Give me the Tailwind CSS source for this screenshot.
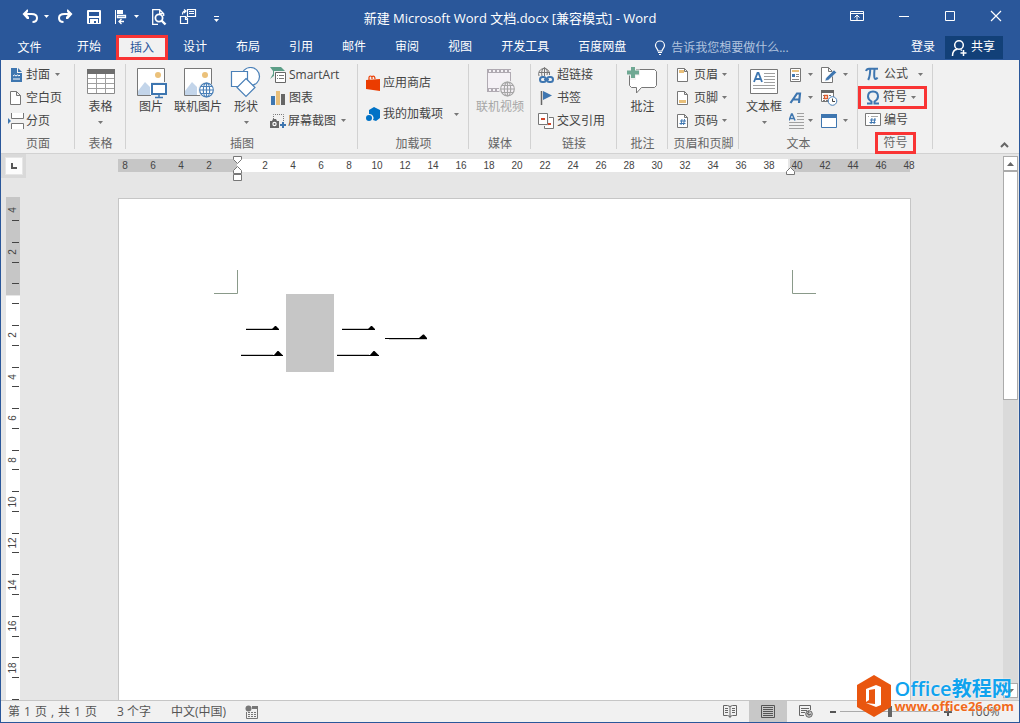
<!DOCTYPE html>
<html lang="zh-CN">
<head>
<meta charset="utf-8">
<title>新建 Microsoft Word 文档.docx - Word</title>
<script src="https://cdn.jsdelivr.net/npm/@tailwindcss/browser@4"></script>
</head>
<body class="relative flex h-screen flex-col overflow-hidden border-x border-b border-[#2a579a] bg-[#e6e6e6] font-['Open_Sans','Noto_Sans_CJK_SC',sans-serif] text-xs leading-4 text-[#444]">
<svg class="hidden" aria-hidden="true">
  <symbol id="caret" viewBox="0 0 5 3"><path d="M0 0h5L2.500 3z" fill="currentColor"/></symbol>
</svg>

<!-- Title bar -->
<header class="shrink-0 bg-[#2a579a] text-white">
  <div class="grid h-[35px] grid-cols-[1fr_auto_1fr] items-center">
    <div class="flex items-center pb-[2px] pl-5">
      <button aria-label="撤消" class="flex items-center gap-[5px]"><svg width="18" height="16" viewBox="0 0 18 16"><path d="M4 5h6.500c3.500 0 5.500 1.500 5.500 4s-2 4-4.500 4" fill="none" stroke="#fff" stroke-width="2"/><path d="M7 .5v2L5.500 5 8 8v2H6L1.500 5 6 .5z" fill="#fff"/></svg><svg class="h-[3px] w-[5px]"><use href="#caret"/></svg></button>
      <button aria-label="恢复" class="ml-2"><svg width="18" height="16" viewBox="0 0 18 16"><path d="M13 5H7.500C4 5 2 6.500 2 9s2 4 4.500 4" fill="none" stroke="#fff" stroke-width="2"/><path d="M10 .5v2L11.500 5 9 8v2h2l4.500-5L11 .5z" fill="#fff"/></svg></button>
      <button aria-label="保存" class="ml-[11px]"><svg width="16" height="16" viewBox="0 0 16 16"><path d="M1.500 1.500h13v13h-13zM2 2.500h12M2.500 2v12M13.500 2v12" fill="none" stroke="#fff"/><path d="M2 7h12v2H2zM4 10h8v5h-2v-3H8v3H4z" fill="#fff"/></svg></button>
      <button aria-label="对齐" class="ml-3 flex items-center gap-[6px]"><svg width="14" height="16" viewBox="0 0 14 16"><path d="M1.500 1v14" stroke="#fff"/><path d="M3 1h6v4H3z" fill="#fff"/><path d="M3.500 6.500h8v2h-8zM5 12.500h5M7.500 10 5 12.500 7.500 15" fill="none" stroke="#fff" stroke-width="1.300"/></svg><svg class="h-[3px] w-[5px]"><use href="#caret"/></svg></button>
      <button aria-label="打印预览" class="ml-3"><svg width="16" height="18" viewBox="0 0 16 18" fill="none" stroke="#fff" stroke-width="1.300"><path d="M7 16.300H1.700V1.700h7l4 4V8M8.700 1.700v4h4"/><circle cx="8" cy="10" r="3.600" stroke-width="1.800"/><path d="m10.500 12.500 4 4" stroke-width="2.400"/></svg></button>
      <button aria-label="粘贴" class="ml-3"><svg width="18" height="18" viewBox="0 0 18 18" fill="none" stroke="#fff" stroke-width="1.200"><path d="M8.500 1.500h8v7h-8zM10 3.500h5M10 5.500h5M1.500 8.500h5l2 2v5h-7zM6.500 8.500v3h2M3.500 6.500c0-3 1-3.500 3-3.500M5 1.500 7 3 5 5"/></svg></button>
      <button aria-label="自定义快速访问工具栏" class="mt-1 ml-4"><svg width="7" height="8" viewBox="0 0 7 8"><path d="M1 1.500h5" stroke="#fff"/><path d="M1 4h5L3.500 7z" fill="#fff"/></svg></button>
    </div>
    <h1 class="pt-px text-[13px]">新建 Microsoft Word 文档.docx [兼容模式] - Word</h1>
    <div class="flex items-center justify-end gap-[34px] pr-[17px] pb-1">
      <button aria-label="功能区显示选项"><svg width="14" height="12" viewBox="0 0 14 12" fill="none" stroke="#fff"><path d="M.5 1.500h13v9H.5zM.5 3.500h13M7 10V5M4.500 7.500 7 5l2.500 2.500"/></svg></button>
      <button aria-label="最小化"><svg width="12" height="12" viewBox="0 0 12 12"><path d="M1 6.500h10" stroke="#fff"/></svg></button>
      <button aria-label="最大化"><svg width="12" height="12" viewBox="0 0 12 12"><path d="M1.500 1.500h9v9h-9z" fill="none" stroke="#fff"/></svg></button>
      <button aria-label="关闭"><svg width="12" height="12" viewBox="0 0 12 12"><path d="m1 1 10 10M11 1 1 11" stroke="#fff" stroke-width="1.200"/></svg></button>
    </div>
  </div>
  <div class="flex h-[25px] items-stretch">
    <nav class="flex items-stretch gap-px">
      <button class="w-[61px] pr-1">文件</button>
      <button class="px-[14px] pb-px">开始</button>
      <button class="border-3 border-[#f93434] bg-[#f1f1f1] px-[11px] text-[#2a579a]">插入</button>
      <button class="px-[14px] pb-px">设计</button>
      <button class="px-[14px] pb-px">布局</button>
      <button class="px-[14px] pb-px">引用</button>
      <button class="px-[14px] pb-px">邮件</button>
      <button class="px-[14px] pb-px">审阅</button>
      <button class="px-[14px] pb-px">视图</button>
      <button class="px-[14px] pb-px">开发工具</button>
      <button class="px-[14px] pb-px">百度网盘</button>
    </nav>
    <label class="ml-[14px] flex flex-1 items-center gap-[5px]">
      <svg width="12" height="16" viewBox="0 0 12 16" fill="none" stroke="#fff" stroke-width="1.200"><path d="M4 11c0-2-2.500-3-2.500-5.500a4.500 4.500 0 0 1 9 0C10.500 8 8 9 8 11zM4 12.500h4M5 14.500h2"/></svg>
      <input aria-label="告诉我您想要做什么" placeholder="告诉我您想要做什么..." class="w-36 bg-transparent outline-none placeholder:text-[#b1c3de]">
    </label>
    <button class="px-[10px] pb-px">登录</button>
    <button class="mt-px mr-4 mb-px flex items-center gap-[3px] bg-[#124078] pr-[8px] pl-[6px]"><svg width="17" height="18" viewBox="0 0 17 18" fill="none" stroke="#fff" stroke-width="1.500"><circle cx="8" cy="6" r="4.300"/><path d="M1.500 17c0-4 2-6.500 5-6.700M9.500 10.500l1.500 1M12.500 11v6M9.500 14h6"/></svg><span class="pb-px">共享</span></button>
  </div>
</header>

<!-- Ribbon -->
<section aria-label="插入" class="flex h-[94px] shrink-0 border-b border-[#d2d2d2] bg-[#f1f1f1] pt-[3px]">
  <div class="relative flex w-[74px] shrink-0 flex-col after:absolute after:top-px after:right-0 after:h-[85px] after:w-px after:bg-[#d2d2d2]">
    <div class="grid h-[69px] grid-rows-3 pl-[7px]">
      <button class="flex items-center gap-[2px]"><svg width="16" height="16" viewBox="0 0 16 16"><path d="M3 1h6v5h5v9H3z" fill="#3e76b0"/><path d="M10 1v4h4z" fill="#3e76b0"/><path d="m5 9 1.500-1L8 9l1.500-1L11 9l1-1M5 12h7" fill="none" stroke="#fff"/></svg>封面<svg class="ml-[3px] h-[3px] w-[5px] text-[#777]"><use href="#caret"/></svg></button>
      <button class="flex items-center gap-[2px]"><svg width="16" height="16" viewBox="0 0 16 16"><path d="M2.500 1.500h6l4 4v9h-10zM8.500 1.500v4h4" fill="#fff" stroke="#777"/></svg>空白页</button>
      <button class="flex items-center gap-[2px]"><svg width="16" height="16" viewBox="0 0 16 16"><path d="M3.500 0v5.500h12V0M3.500 16v-5.500h12V16" fill="#fff" stroke="#777"/><path d="M0 5v6l3-3z" fill="#3e76b0"/></svg>分页</button>
    </div>
    <div class="pt-1 text-center text-[#666]">页面</div>
  </div>

  <div class="relative flex w-[51px] shrink-0 flex-col after:absolute after:top-px after:right-0 after:h-[85px] after:w-px after:bg-[#d2d2d2]">
    <button class="flex h-[69px] flex-col items-center pt-1"><svg width="32" height="32" viewBox="0 0 32 32"><path d="M2.500 2.500h27v24h-27z" fill="#fff" stroke="#8a8a8a"/><path d="M2 2h28v5H2z" fill="#6d6d6d"/><path d="M3 11.500h26M3 16.500h26M3 21.500h26M11.500 7v19M20.500 7v19" stroke="#a0a0a0"/></svg><span>表格</span><svg class="mt-[6px] h-[3px] w-[5px] text-[#777]"><use href="#caret"/></svg></button>
    <div class="pt-1 text-center text-[#666]">表格</div>
  </div>

  <div class="relative flex w-[232px] shrink-0 flex-col after:absolute after:top-px after:right-0 after:h-[85px] after:w-px after:bg-[#d2d2d2]">
    <div class="flex h-[69px] pl-[2px]">
      <button class="flex w-[46px] flex-col items-center pt-1"><svg width="32" height="32" viewBox="0 0 32 32"><path d="M2.500 1.500h27v27h-27z" fill="#fff" stroke="#777"/><circle cx="23" cy="8" r="3" fill="#ebc17a"/><path d="M3 28V24l7-9 5 5v8z" fill="#c3d5ea"/><path d="M16 15h16v14H16z" fill="#f1f1f1"/><path d="M17 17h14v10H17z" fill="#fff" stroke="#3e76b0" stroke-width="2"/><path d="M24 28v2M20 30.500h8" stroke="#3e76b0" stroke-width="1.500"/></svg>图片</button>
      <button class="flex w-[48px] flex-col items-center pt-1"><svg width="32" height="32" viewBox="0 0 32 32"><path d="M2.500 1.500h27v27h-27z" fill="#fff" stroke="#777"/><circle cx="23" cy="8" r="3" fill="#ebc17a"/><path d="M3 28V24l7-9 5 5v8z" fill="#c3d5ea"/><circle cx="24" cy="23" r="8" fill="#f1f1f1"/><g fill="#fff" stroke="#4a80b8" stroke-width="1.200"><circle cx="24.500" cy="23" r="6.800"/><ellipse cx="24.500" cy="23" rx="3.200" ry="6.800" fill="none"/><path d="M24.500 16v14M18 23h13M19 19.500h11M19 26.500h11"/></g></svg>联机图片</button>
      <button class="flex w-[48px] flex-col items-center pt-1"><svg width="32" height="32" viewBox="0 0 32 32" fill="#fff" stroke="#4a80b8" stroke-width="1.200"><circle cx="20.500" cy="9.500" r="9"/><path d="M1.500 4.500h16v15h-16z"/><path d="m16 11.500 9 9-9 9-9-9z"/></svg><span>形状</span><svg class="mt-[6px] h-[3px] w-[5px] text-[#777]"><use href="#caret"/></svg></button>
      <div class="grid grid-rows-3">
        <button class="flex items-center gap-[3px]"><svg width="16" height="16" viewBox="0 0 16 16"><path d="M0 0h11l4 4H5v4l-5 4 3-5V4z" fill="#5c9e87"/><path d="M4 4h12v12H4z" fill="#f1f1f1"/><path d="M5.500 5.500h10v10h-10z" fill="#fff" stroke="#666"/><path d="M7 8.500h1M9 8.500h5M7 11.500h1M9 11.500h5" stroke="#777"/></svg>SmartArt</button>
        <button class="flex items-center gap-[3px]"><svg width="16" height="16" viewBox="0 0 16 16"><path d="M1 6h4v9H1z" fill="#3e76b0"/><path d="M6 1h4v14H6z" fill="#e8bf7a"/><path d="M11 4h4v11h-4z" fill="#666"/></svg>图表</button>
        <button class="flex items-center gap-[2px]"><svg width="16" height="16" viewBox="0 0 16 16"><path d="M3.500 6V1.500h10V9" fill="none" stroke="#777" stroke-dasharray="1 1"/><path d="M0 8h2l1-2h3l1 2h2v7H0z" fill="#666"/><circle cx="4.500" cy="11" r="2.200" fill="#fff"/><circle cx="4.500" cy="11" r="1" fill="#666"/><path d="M13 9v6M10 12h6" stroke="#3e76b0" stroke-width="2"/></svg>屏幕截图<svg class="ml-[3px] h-[3px] w-[5px] text-[#777]"><use href="#caret"/></svg></button>
      </div>
    </div>
    <div class="pt-1 text-center text-[#666]">插图</div>
  </div>

  <div class="relative flex w-[111px] shrink-0 flex-col after:absolute after:top-px after:right-0 after:h-[85px] after:w-px after:bg-[#d2d2d2]">
    <div class="grid h-[69px] grid-rows-[31px_31px] content-center pt-[2px] pl-[7px]">
      <button class="flex items-center gap-[2px]"><svg width="16" height="16" viewBox="0 0 16 16"><path d="m1 5 14-1v12L1 14z" fill="#eb3c00"/><path d="M4 5V2.500C4 .5 7 .5 7 2.500V4M7 1.500c2-1 3 0 3 2.500" fill="none" stroke="#eb3c00" stroke-width="1.200"/></svg>应用商店</button>
      <button class="flex items-center gap-[2px]"><svg width="16" height="16" viewBox="0 0 16 16"><path d="m9 1 6 3v8l-4 3-3-1a4 4 0 0 0-4-6V4z" fill="#0072c6"/><circle cx="4" cy="12" r="3" fill="#0072c6"/></svg>我的加载项<svg class="ml-[9px] h-[3px] w-[5px] text-[#777]"><use href="#caret"/></svg></button>
    </div>
    <div class="pt-1 text-center text-[#666]">加载项</div>
  </div>

  <div class="relative flex w-[62px] shrink-0 flex-col after:absolute after:top-px after:right-0 after:h-[85px] after:w-px after:bg-[#d2d2d2]">
    <button disabled class="flex h-[69px] flex-col items-center pt-1 text-[#a6a6a6]"><svg width="32" height="32" viewBox="0 0 32 32"><path d="M3 2h24v23H3z" fill="#b0aab2"/><path d="M4 6h22v15H4z" fill="#f5f1f6"/><path d="M5 4h22M5 23h12" stroke="#f5f1f6" stroke-width="2" stroke-dasharray="2 2"/><circle cx="23.500" cy="22" r="8.500" fill="#f1f1f1"/><g fill="#f5f1f6" stroke="#a6a6a6" stroke-width="1.200"><circle cx="23.500" cy="22" r="6.800"/><ellipse cx="23.500" cy="22" rx="3.200" ry="6.800" fill="none"/><path d="M23.500 15v14M17 22h13M18 18.500h11M18 25.500h11"/></g></svg>联机视频</button>
    <div class="pt-1 text-center text-[#666]">媒体</div>
  </div>

  <div class="relative flex w-[86px] shrink-0 flex-col after:absolute after:top-px after:right-0 after:h-[85px] after:w-px after:bg-[#d2d2d2]">
    <div class="grid h-[69px] grid-rows-3 pl-[7px]">
      <button class="flex items-center gap-[3px]"><svg width="16" height="16" viewBox="0 0 16 16" fill="none"><g stroke="#777"><path d="M1 9A5.500 5.500 0 1 1 11.500 8M6.500.5V9M1 5.500h11M4 9C3 5 4 2 6.500.5 9 2 10 5 9 8"/></g><g stroke="#3e76b0" stroke-width="2"><rect x="2" y="10" width="6" height="5" rx="2.500"/><rect x="9" y="10" width="6" height="5" rx="2.500"/></g><path d="M6 12.500h5" stroke="#3e76b0" stroke-width="1.500"/></svg>超链接</button>
      <button class="flex items-center gap-[3px]"><svg width="16" height="16" viewBox="0 0 16 16"><path d="M3.500 1v14" stroke="#666" stroke-width="1.500"/><path d="m5 1 9 4.500L5 10z" fill="#3e76b0"/></svg>书签</button>
      <button class="flex items-center gap-[3px]"><svg width="16" height="16" viewBox="0 0 16 16"><path d="M.5.5h9v11h-9z" fill="#fff" stroke="#777"/><path d="M3 5h4v2H3z" fill="#d2472b"/><path d="M11 4.500h4.500v11h-9V13" fill="none" stroke="#777"/><path d="M11 5h4v10H7v-2h4z" fill="#fff"/><path d="M10 10h3v2h-3z" fill="#d2472b"/></svg>交叉引用</button>
    </div>
    <div class="pt-1 text-center text-[#666]">链接</div>
  </div>

  <div class="relative flex w-[51px] shrink-0 flex-col after:absolute after:top-px after:right-0 after:h-[85px] after:w-px after:bg-[#d2d2d2]">
    <button class="flex h-[69px] flex-col items-center pt-1"><svg width="32" height="32" viewBox="0 0 32 32"><path d="M4.500 2.500h23l2 2v14l-2 2h-13l-5 5.500v-5.500h-5l-2-2v-14z" fill="#fff" stroke="#777"/><path d="M6-1v14M-1 5.500h14" stroke="#f1f1f1" stroke-width="6"/><path d="M6 0v11M0 5.500h12" stroke="#6fa893" stroke-width="4"/></svg>批注</button>
    <div class="pt-1 text-center text-[#666]">批注</div>
  </div>

  <div class="relative flex w-[71px] shrink-0 flex-col after:absolute after:top-px after:right-0 after:h-[85px] after:w-px after:bg-[#d2d2d2]">
    <div class="grid h-[69px] grid-rows-3 pl-[7px]">
      <button class="flex items-center gap-[3px]"><svg width="16" height="16" viewBox="0 0 16 16"><path d="M2.500 1.500h7l3 3v10h-10zM9.500 1.500v3h3" fill="#fff" stroke="#777"/><path d="M4 3h5v3H4z" fill="#e8bf7a"/></svg>页眉<svg class="ml-px h-[3px] w-[5px] text-[#777]"><use href="#caret"/></svg></button>
      <button class="flex items-center gap-[3px]"><svg width="16" height="16" viewBox="0 0 16 16"><path d="M2.500 1.500h7l3 3v10h-10zM9.500 1.500v3h3" fill="#fff" stroke="#777"/><path d="M4 10h7v3H4z" fill="#e8bf7a"/></svg>页脚<svg class="ml-px h-[3px] w-[5px] text-[#777]"><use href="#caret"/></svg></button>
      <button class="flex items-center gap-[3px]"><svg width="16" height="16" viewBox="0 0 16 16"><path d="M2.500 1.500h7l3 3v10h-10zM9.500 1.500v3h3" fill="#fff" stroke="#777"/><path d="m7 6-1 6M9.500 6l-1 6M5 8h6M4.500 10.500h6" stroke="#3e76b0"/></svg>页码<svg class="ml-px h-[3px] w-[5px] text-[#777]"><use href="#caret"/></svg></button>
    </div>
    <div class="pt-1 text-center whitespace-nowrap text-[#666]">页眉和页脚</div>
  </div>

  <div class="relative flex w-[119px] shrink-0 flex-col after:absolute after:top-px after:right-0 after:h-[85px] after:w-px after:bg-[#d2d2d2]">
    <div class="flex h-[69px]">
      <button class="flex w-[50px] flex-col items-center pt-1"><svg width="32" height="32" viewBox="0 0 32 32"><path d="M2.500 2.500h27v24h-27z" fill="#fff" stroke="#777"/><path d="m6 15 3.500-9h1L14 15M7.500 12h5" fill="none" stroke="#3e76b0" stroke-width="1.800"/><path d="M16 6.500h11M16 9.500h11M16 12.500h11M16 15.500h11M5 18.500h22M5 21.500h22" stroke="#a0a0a0"/></svg><span>文本框</span><svg class="mt-[6px] h-[3px] w-[5px] text-[#777]"><use href="#caret"/></svg></button>
      <div class="grid w-8 grid-rows-3">
        <button aria-label="文档部件" class="flex items-center gap-[3px]"><svg width="16" height="16" viewBox="0 0 16 16"><path d="M1.500 1.500h10v13h-10z" fill="#fff" stroke="#777"/><path d="M3 3h7v2H3z" fill="#e8bf7a"/><path d="M3 7h3v3H3z" fill="#3e76b0"/><path d="M7 7.500h3M7 9.500h3M3 12.500h7" stroke="#888"/></svg><svg class="h-[3px] w-[5px] text-[#777]"><use href="#caret"/></svg></button>
        <button aria-label="艺术字" class="flex items-center gap-[3px]"><svg width="16" height="16" viewBox="0 0 16 16"><path d="M1.500 13 8 3.500h3L10 13M4 9.500h6" fill="none" stroke="#3e76b0" stroke-width="2.200"/></svg><svg class="h-[3px] w-[5px] text-[#777]"><use href="#caret"/></svg></button>
        <button aria-label="首字下沉" class="flex items-center gap-[3px]"><svg width="16" height="16" viewBox="0 0 16 16"><path d="M0 7.500 2.500 1h.7L6 7.500M1 5.500h4" fill="none" stroke="#3e76b0" stroke-width="1.500"/><path d="M8 .5h7M8 3.500h7M8 6.500h7M-1 9.500h16M-1 12.500h16M-1 15.500h16" stroke="#a0a0a0"/></svg><svg class="h-[3px] w-[5px] text-[#777]"><use href="#caret"/></svg></button>
      </div>
      <div class="grid grid-rows-3">
        <button aria-label="签名行" class="flex items-center gap-[6px]"><svg width="16" height="16" viewBox="0 0 16 16"><path d="M.5.5h7l4 4v11H.5zM7.500.5v4h4" fill="#fff" stroke="#777"/><path d="m4 14 1-3 8-8 2.500 2.500-8 7.500z" fill="#3e76b0" stroke="#f1f1f1" stroke-width=".5"/></svg><svg class="h-[3px] w-[5px] text-[#777]"><use href="#caret"/></svg></button>
        <button aria-label="日期和时间" class="flex items-center"><svg width="17" height="16" viewBox="0 0 17 16"><path d="M.5.5h12v11H.5z" fill="#fff" stroke="#777"/><path d="M0 0h13v3H0z" fill="#666"/><path d="M2 5.500h9M2 8.500h2M2 10.500h5" stroke="#777" stroke-dasharray="2 1"/><path d="M3.500 5.500h3v3h-3z" fill="#fff" stroke="#e05b2b" stroke-width="1.300"/><circle cx="11.500" cy="11" r="4.300" fill="#fff" stroke="#4a80b8"/><path d="M11.500 8.500v3H14" fill="none" stroke="#444"/></svg></button>
        <button aria-label="对象" class="flex items-center gap-[6px]"><svg width="16" height="16" viewBox="0 0 16 16"><path d="M.5 1.500h15v13H.5z" fill="#fff" stroke="#3e76b0"/><path d="M0 1h16v4H0z" fill="#3e76b0"/></svg><svg class="h-[3px] w-[5px] text-[#777]"><use href="#caret"/></svg></button>
      </div>
    </div>
    <div class="pt-1 text-center text-[#666]">文本</div>
  </div>

  <div class="relative flex w-[75px] shrink-0 flex-col after:absolute after:top-px after:right-0 after:h-[85px] after:w-px after:bg-[#d2d2d2]">
    <div class="grid h-[69px] grid-rows-3">
      <button class="flex items-center gap-[3px] pl-[7px]"><svg width="16" height="16" viewBox="0 0 16 16" fill="none" stroke="#3e76b0"><path d="M1 5c.5-1.700 1.500-2.300 3-2.300h9" stroke-width="2"/><path d="M5.200 3c0 5-.5 8-2 11M9.500 3c-.5 6-.5 10 1 10 1 0 1.500-.5 2-1.500" stroke-width="2"/></svg>公式<svg class="ml-[7px] h-[3px] w-[5px] text-[#777]"><use href="#caret"/></svg></button>
      <button class="mr-[6px] -mb-px flex items-center gap-[2px] border-3 border-[#f93434] pl-1"><svg width="16" height="15" viewBox="0 0 16 15"><path d="M2 13.500h4.500v-2C4 10 3 8.500 3 6.500 3 3.500 5 1.500 8 1.500s5 2 5 5c0 2-1 3.500-3.500 5v2H14" fill="none" stroke="#3e76b0" stroke-width="2"/></svg>符号<svg class="ml-[2px] h-[3px] w-[5px] text-[#777]"><use href="#caret"/></svg></button>
      <button class="flex items-center gap-[3px] pl-[7px]"><svg width="16" height="16" viewBox="0 0 16 16"><path d="M.5 1.500h15v12H.5z" fill="#fff" stroke="#777"/><path d="M3 4.500h1M6 4.500h7" stroke="#aaa"/><path d="m7 6-1 6M10 6l-1 6M5 8h6M4.500 10.500h6" stroke="#3e76b0"/></svg>编号</button>
    </div>
    <div class="-mb-px flex flex-1 justify-center pt-px"><span class="relative z-10 flex items-center border-3 border-[#f93434] bg-[#f1f1f1] px-[5px] text-[#666]">符号</span></div>
  </div>
  <button aria-label="折叠功能区" class="mt-auto mr-[10px] mb-1 ml-auto"><svg width="9" height="8" viewBox="0 0 9 8"><path d="m1 6 3.500-3.500L8 6" fill="none" stroke="#666" stroke-width="2"/></svg></button>
</section>

<!-- Workspace -->
<main class="flex min-h-0 flex-1">
  <div class="flex w-[25px] shrink-0 flex-col">
    <div class="flex h-6 shrink-0 items-center justify-center bg-[#d9d9d9]"><button aria-label="制表符" class="flex h-[18px] w-[18px] items-center justify-center border border-[#e6e6e6] bg-[#fcfcfc]"><svg width="6" height="6" viewBox="0 0 6 6"><path d="M1 0v5h5" fill="none" stroke="#555" stroke-width="2"/></svg></button></div>
    <div class="mt-[19px] ml-[5px] min-h-0 w-[14px] flex-1 overflow-hidden bg-[linear-gradient(#c6c6c6_98px,#e6e6e6_98px,#e6e6e6_99px,#fff_99px)] font-['Liberation_Sans',sans-serif] text-[10px]">
      <div class="-mt-[7px] grid h-[540px] grid-rows-13 items-center text-center">
        <div class="flex h-1/2 items-center justify-center border-b [border-image:linear-gradient(90deg,transparent_6px,#444_6px,#444_12px,transparent_12px)_1]"><span class="-rotate-90">4</span></div>
        <div class="flex h-1/2 items-center justify-center border-y [border-image:linear-gradient(90deg,transparent_6px,#444_6px,#444_12px,transparent_12px)_1]"><span class="-rotate-90">2</span></div>
        <div class="flex h-1/2 items-center justify-center border-y [border-image:linear-gradient(90deg,transparent_6px,#444_6px,#444_12px,transparent_12px)_1]"></div>
        <div class="flex h-1/2 items-center justify-center border-y [border-image:linear-gradient(90deg,transparent_6px,#444_6px,#444_12px,transparent_12px)_1]"><span class="-rotate-90">2</span></div>
        <div class="flex h-1/2 items-center justify-center border-y [border-image:linear-gradient(90deg,transparent_6px,#444_6px,#444_12px,transparent_12px)_1]"><span class="-rotate-90">4</span></div>
        <div class="flex h-1/2 items-center justify-center border-y [border-image:linear-gradient(90deg,transparent_6px,#444_6px,#444_12px,transparent_12px)_1]"><span class="-rotate-90">6</span></div>
        <div class="flex h-1/2 items-center justify-center border-y [border-image:linear-gradient(90deg,transparent_6px,#444_6px,#444_12px,transparent_12px)_1]"><span class="-rotate-90">8</span></div>
        <div class="flex h-1/2 items-center justify-center border-y [border-image:linear-gradient(90deg,transparent_6px,#444_6px,#444_12px,transparent_12px)_1]"><span class="-rotate-90">10</span></div>
        <div class="flex h-1/2 items-center justify-center border-y [border-image:linear-gradient(90deg,transparent_6px,#444_6px,#444_12px,transparent_12px)_1]"><span class="-rotate-90">12</span></div>
        <div class="flex h-1/2 items-center justify-center border-y [border-image:linear-gradient(90deg,transparent_6px,#444_6px,#444_12px,transparent_12px)_1]"><span class="-rotate-90">14</span></div>
        <div class="flex h-1/2 items-center justify-center border-y [border-image:linear-gradient(90deg,transparent_6px,#444_6px,#444_12px,transparent_12px)_1]"><span class="-rotate-90">16</span></div>
        <div class="flex h-1/2 items-center justify-center border-y [border-image:linear-gradient(90deg,transparent_6px,#444_6px,#444_12px,transparent_12px)_1]"><span class="-rotate-90">18</span></div>
        <div class="flex h-1/2 items-center justify-center border-y [border-image:linear-gradient(90deg,transparent_6px,#444_6px,#444_12px,transparent_12px)_1]"></div>
      </div>
    </div>
  </div>

  <div class="flex min-w-0 flex-1 flex-col items-center">
    <div class="relative mt-[5px] mb-[26px] h-[13px] w-[793px] shrink-0 bg-[linear-gradient(90deg,#c6c6c6_119px,#fff_119px,#fff_670px,#e6e6e6_670px,#e6e6e6_672px,#c6c6c6_672px,#c6c6c6_792px,#e6e6e6_792px)] font-['Liberation_Sans',sans-serif] text-[10px] leading-[14px]">
      <div class="-mr-4 -ml-[7px] flex text-center">
        <span class="w-7">8</span><span class="w-7">6</span><span class="w-7">4</span><span class="w-7">2</span><span class="w-7"></span><span class="w-7">2</span><span class="w-7">4</span><span class="w-7">6</span><span class="w-7">8</span><span class="w-7">10</span><span class="w-7">12</span><span class="w-7">14</span><span class="w-7">16</span><span class="w-7">18</span><span class="w-7">20</span><span class="w-7">22</span><span class="w-7">24</span><span class="w-7">26</span><span class="w-7">28</span><span class="w-7">30</span><span class="w-7">32</span><span class="w-7">34</span><span class="w-7">36</span><span class="w-7">38</span><span class="w-7">40</span><span class="w-7">42</span><span class="w-7">44</span><span class="w-7">46</span><span class="w-7">48</span>
      </div>
      <svg class="absolute -top-[3px] left-[114px]" width="11" height="26" viewBox="0 0 11 26" fill="#fff" stroke="#777"><path d="M1.500.5h8v3l-4 4-4-4zM1.500 17.500v-3l4-4 4 4v3zM1.500 18.500h8v6h-8z"/></svg>
      <svg class="absolute top-2 left-[667px]" width="11" height="9" viewBox="0 0 11 9" fill="#fff" stroke="#777"><path d="M1.500 7.500v-3l4-4 4 4v3z"/></svg>
    </div>
    <article id="doc" aria-label="文档" class="min-h-0 w-[793px] flex-1 overflow-hidden border border-b-0 border-[#c6c6c6] bg-white">
      <svg width="791" height="300" viewBox="0 0 791 300">
        <path d="M95 94.500h23.500V71M697 94.500h-23.500V71" fill="none" stroke="#8a9a8a"/>
        <path d="M167 95h48v78h-48z" fill="#c6c6c6"/>
        <g stroke="#c9c9c9"><path d="M127 129.500h28M122 155.500h32M223 129.500h28M218 155.500h32M270 140.500h38"/></g>
        <g stroke="#000"><path d="M127 130.500h33M122 156.500h42M223 130.500h33M218 156.500h42M266 139.500h42"/></g>
        <path d="m153 130 3-3h1l3 3zM155 156l3.500-4h1l4 4zM249 130l3-3h1l3 3zM251 156l3.500-4h1l4 4zM300 139l4-3.500h1l3 3.500z"/>
      </svg>
    </article>
  </div>

  <div role="scrollbar" aria-controls="doc" aria-valuenow="0" class="mt-[2px] mr-px flex w-[15px] shrink-0 flex-col bg-[#dadada] pb-[2px]">
    <button aria-label="向上滚动" class="flex h-[15px] items-center justify-center border border-[#ababab] bg-white"><svg width="7" height="4" viewBox="0 0 7 4"><path d="M0 4h7L3.500 0z" fill="#666"/></svg></button>
    <div class="h-[229px] border border-[#ababab] bg-white"></div>
    <button aria-label="向下滚动" class="mt-auto flex h-[15px] items-center justify-center border border-[#ababab] bg-white"><svg width="7" height="4" viewBox="0 0 7 4"><path d="M0 0h7L3.500 4z" fill="#666"/></svg></button>
  </div>
</main>

<!-- Status bar -->
<footer class="flex h-[22px] shrink-0 items-center border-t border-[#c6c6c6] bg-[#f1f1f1] pl-[7px] text-[#555]">
  <span class="flex gap-1"><span>第</span><span>1</span><span>页</span><span>,</span><span>共</span><span>1</span><span>页</span></span>
  <span class="ml-5">3 个字</span>
  <span class="ml-5">中文(中国)</span>
  <button aria-label="宏" class="ml-[19px]"><svg width="14" height="14" viewBox="0 0 14 14"><circle cx="3.500" cy="3.500" r="3" fill="#777"/><path d="M7 1h6v3H7z" fill="#777"/><path d="M1.500 7v6.500h11V4" fill="none" stroke="#777"/><path d="M3 7.500h9M3 9.500h9M3 11.500h9" fill="none" stroke="#777" stroke-dasharray="2 1"/></svg></button>
  <div class="ml-auto flex h-full items-center">
    <button aria-label="阅读视图" class="flex h-full w-[38px] items-center justify-center"><svg width="14" height="13" viewBox="0 0 14 13" fill="none" stroke="#666"><path d="M.5.5h4l2.500 1 2.500-1h4v10h-4L7 11.500l-2.500-1h-4zM7 1v12M2 3.500h3M2 5.500h3M2 7.500h3M9 3.500h3M9 5.500h3M9 7.500h3"/></svg></button>
    <button aria-label="页面视图" class="flex h-full w-[38px] items-center justify-center bg-[#c8c8c8]"><svg width="14" height="13" viewBox="0 0 14 13" fill="none" stroke="#555"><path d="M.5.5h13v12H.5zM2 2.500h10M2 4.500h10M2 6.500h10M2 8.500h10M2 10.500h10"/></svg></button>
    <button aria-label="Web 版式视图" class="flex h-full w-[38px] items-center justify-center"><svg width="14" height="13" viewBox="0 0 14 13" fill="none" stroke="#666"><path d="M5 10.500H.5V.5h11V5M2 3.500h8M2 5.500h6M2 7.500h4"/><circle cx="10" cy="9" r="3.300" fill="#ccc"/><path d="m8 8 2 2 2-1M9 6l1 2" stroke-width="1.300"/></svg></button>
    <button aria-label="缩小" class="ml-1"><svg width="8" height="8" viewBox="0 0 8 8"><path d="M1 4h6" stroke="#555" stroke-width="2"/></svg></button>
    <input type="range" aria-label="缩放" value="50" class="ml-[3px] h-4 w-[100px] appearance-none bg-[linear-gradient(#aaa,#aaa)] bg-[length:100%_1px] bg-center bg-no-repeat [&::-webkit-slider-thumb]:h-[11px] [&::-webkit-slider-thumb]:w-1 [&::-webkit-slider-thumb]:appearance-none [&::-webkit-slider-thumb]:bg-[#666]">
    <button aria-label="放大" class="ml-1"><svg width="8" height="8" viewBox="0 0 8 8"><path d="M0 4h8M4 0v8" stroke="#555" stroke-width="2"/></svg></button>
    <button class="ml-[17px] w-[50px] text-left">100%</button>
  </div>
</footer>

<!-- Site badge over the lower right corner -->
<aside class="pointer-events-none absolute right-[5px] bottom-1 flex items-center gap-px">
  <svg width="38" height="44" viewBox="0 0 38 44"><path d="m19 1 17 10v22L19 43 2 33V11z" fill="#e9560f"/><path d="m11 15 10-4 5 2v18l-5 2-10-4 9 1V15l-6 1v10l-3 2z" fill="#fff"/></svg>
  <div class="font-semibold whitespace-nowrap [text-shadow:0_0_2px_#fff]">
    <div class="text-[20px] leading-5 text-[#10a3ee]">Office教程网</div>
    <div class="text-[13px] leading-[14px] font-bold text-[#f06a1c]">www.office26.com</div>
  </div>
</aside>
</body>
</html>
